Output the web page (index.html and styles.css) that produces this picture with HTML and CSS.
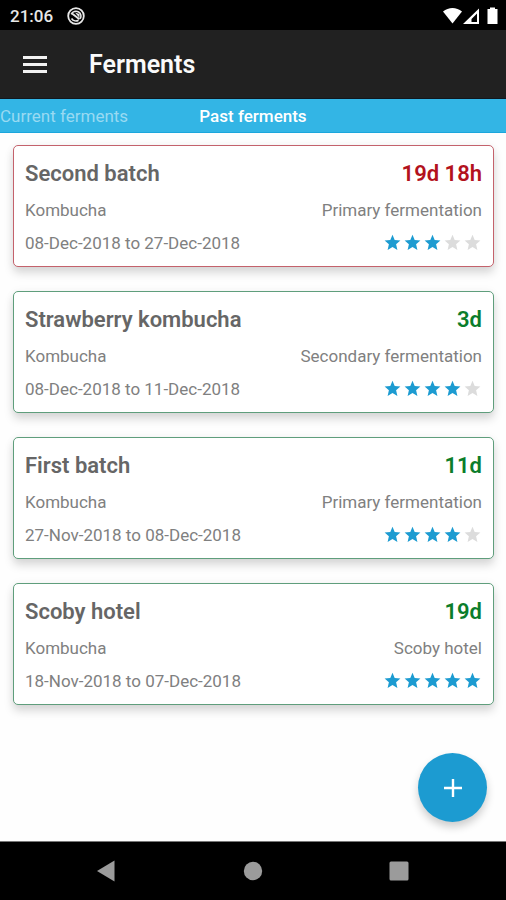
FILE: index.html
```html
<!DOCTYPE html>
<html lang="en">
<head>
<meta charset="utf-8">
<meta name="viewport" content="width=device-width, initial-scale=1">
<title>Ferments</title>
<link rel="stylesheet" href="styles.css">
</head>
<body>
<svg width="0" height="0" class="sprite" aria-hidden="true">
  <symbol id="star" viewBox="0 0 20 20"><path d="M10.500 1.800l2.200 5.300 5.700.5-4.300 3.700 1.300 5.700-4.900-3-4.900 3 1.300-5.700-4.300-3.700 5.700-.5z"/></symbol>
</svg>

<div class="status">
  <span class="clock">21:06</span>
  <svg class="notice" width="20" height="20" viewBox="0 0 20 20" fill="none" stroke="#e8e8e8" aria-hidden="true">
    <circle cx="10" cy="10" r="7.8" stroke-width="1.8"/>
    <path d="M5.2 8.2C6.4 5.3 10 4.6 12.6 6c2.500 1.400 3 4.600 1.600 6.800M5.500 12.500c1.800 2.600 4.800 3 7 1.700" stroke-width="1.600"/>
    <path d="M6 7.500l7.500 5.700" stroke-width="2"/>
    <path d="M9 6.500l4.500 1.500v4z" fill="#e8e8e8" stroke="none"/>
  </svg>
  <svg class="signals" width="56" height="18" viewBox="0 0 56 18" fill="#fff" aria-hidden="true">
    <path d="M0 4.500C5.500-.2 13.500-.2 19 4.500L9.500 16.500z"/>
    <path fill-rule="evenodd" d="M20 17L36 1.500V17zM28.500 15H34V6.500L28.500 12z"/>
    <path d="M47 2V.5h5V2h2.500v15h-10V2z"/>
  </svg>
</div>

<header class="appbar">
  <button class="menu" type="button" aria-label="Menu">
    <svg width="24" height="18" viewBox="0 0 24 18" fill="#f2f2f2"><path d="M0 0h24v3H0zM0 7h24v3H0zM0 14h24v3H0z"/></svg>
  </button>
  <h1>Ferments</h1>
</header>

<nav class="tabs">
  <a href="#current">Current ferments</a>
  <a href="#past" class="active" aria-current="page">Past ferments</a>
</nav>

<main>
  <article class="card late">
    <div class="row head"><h2>Second batch</h2><strong>19d 18h</strong></div>
    <div class="row"><span>Kombucha</span><span>Primary fermentation</span></div>
    <div class="row"><span>08-Dec-2018 to 27-Dec-2018</span>
      <span class="stars" role="img" aria-label="3 of 5"><svg><use href="#star"/></svg><svg><use href="#star"/></svg><svg><use href="#star"/></svg><svg class="off"><use href="#star"/></svg><svg class="off"><use href="#star"/></svg></span></div>
  </article>
  <article class="card">
    <div class="row head"><h2>Strawberry kombucha</h2><strong>3d</strong></div>
    <div class="row"><span>Kombucha</span><span>Secondary fermentation</span></div>
    <div class="row"><span>08-Dec-2018 to 11-Dec-2018</span>
      <span class="stars" role="img" aria-label="4 of 5"><svg><use href="#star"/></svg><svg><use href="#star"/></svg><svg><use href="#star"/></svg><svg><use href="#star"/></svg><svg class="off"><use href="#star"/></svg></span></div>
  </article>
  <article class="card">
    <div class="row head"><h2>First batch</h2><strong>11d</strong></div>
    <div class="row"><span>Kombucha</span><span>Primary fermentation</span></div>
    <div class="row"><span>27-Nov-2018 to 08-Dec-2018</span>
      <span class="stars" role="img" aria-label="4 of 5"><svg><use href="#star"/></svg><svg><use href="#star"/></svg><svg><use href="#star"/></svg><svg><use href="#star"/></svg><svg class="off"><use href="#star"/></svg></span></div>
  </article>
  <article class="card">
    <div class="row head"><h2>Scoby hotel</h2><strong>19d</strong></div>
    <div class="row"><span>Kombucha</span><span>Scoby hotel</span></div>
    <div class="row"><span>18-Nov-2018 to 07-Dec-2018</span>
      <span class="stars" role="img" aria-label="5 of 5"><svg><use href="#star"/></svg><svg><use href="#star"/></svg><svg><use href="#star"/></svg><svg><use href="#star"/></svg><svg><use href="#star"/></svg></span></div>
  </article>
  <button class="fab" type="button" aria-label="Add ferment">
    <svg width="18" height="18" viewBox="0 0 18 18" fill="#fff"><path d="M7.800 0h2.400v7.800H18v2.400h-7.800V18H7.800v-7.800H0V7.800h7.800z"/></svg>
  </button>
</main>

<footer class="sysnav">
  <button type="button" aria-label="Back"><svg width="20" height="22" viewBox="0 0 20 22"><path d="M0 11L17.500 .5v21z"/></svg></button>
  <button type="button" aria-label="Home"><svg width="20" height="20" viewBox="0 0 20 20"><circle cx="10" cy="10" r="9.200"/></svg></button>
  <button type="button" aria-label="Recent apps"><svg width="20" height="20" viewBox="0 0 20 20"><rect x=".5" y=".5" width="19" height="19" rx="1.500"/></svg></button>
</footer>
</body>
</html>
```
FILE: styles.css
```css
* { box-sizing: border-box; }
body {
  margin: 0;
  min-height: 100vh;
  display: flex;
  flex-direction: column;
  background: #fefefe;
  font-family: Roboto, "Liberation Sans", sans-serif;
  font-size: 17px;
  color: #666;
}
.sprite { position: absolute; }
button { border: 0; padding: 0; background: none; display: grid; place-items: center; }
h1, h2 { margin: 0; font-weight: 600; }

.status {
  display: flex;
  align-items: center;
  height: 30px;
  padding: 1px 7px 0 10px;
  background: #000;
  color: #e8e8e8;
}
.clock { font-size: 17px; font-weight: 500; line-height: 28px; }
.notice { margin-left: 13px; }
.signals { margin-left: auto; }

.appbar {
  display: flex;
  align-items: center;
  gap: 42px;
  height: 69px;
  padding: 2px 22px 0;
  background: #212121;
  border-bottom: 1px solid #101820;
  color: #fafafa;
}
.menu { width: 25px; height: 48px; }
.appbar h1 { font-size: 25px; line-height: 32px; }

.tabs {
  display: grid;
  grid-template-columns: 1fr auto 1fr;
  padding-top: 2px;
  background: #33b5e5;
  border-bottom: 1px solid #1ba6dc;
  line-height: 31px;
}
.tabs a { color: #99daf2; text-decoration: none; }
.tabs .active { color: #fff; font-weight: 500; }

main {
  position: relative;
  flex: 1;
  display: flex;
  flex-direction: column;
  gap: 24px;
  padding: 12px 12px 24px 13px;
}
.card {
  display: flex;
  flex-direction: column;
  gap: 9px;
  padding: 13px 11px 11px;
  border: 1px solid #5f9e7c;
  border-radius: 5px;
  background: #fff;
  box-shadow: 0 6px 10px rgba(0, 0, 0, .15), 0 0 10px rgba(0, 0, 0, .04);
}
.card.late { border-color: #c4626c; }
.row {
  display: flex;
  justify-content: space-between;
  align-items: center;
  line-height: 24px;
  color: #808080;
}
.head { line-height: 30px; font-size: 22px; color: #666; }
.head h2 { font-size: 22px; }
.head strong { font-weight: 600; color: #0b7d2b; }
.late .head strong { color: #b3121d; }
.stars { display: flex; }
.stars svg { width: 20px; height: 20px; fill: #1c9bd1; }
.stars .off { fill: #dcdcdc; }

.fab {
  position: absolute;
  right: 19px;
  bottom: 19px;
  width: 69px;
  height: 69px;
  border-radius: 50%;
  background: #1c9bd1;
  box-shadow: 0 5px 9px rgba(0, 0, 0, .2);
}

.sysnav {
  display: flex;
  justify-content: center;
  gap: 126px;
  padding: 18px 0;
  height: 59px;
  background: #000;
  border-top: 1px solid #777;
}
.sysnav button { width: 20px; height: 22px; }
.sysnav svg { fill: #9b9b9b; }
```
